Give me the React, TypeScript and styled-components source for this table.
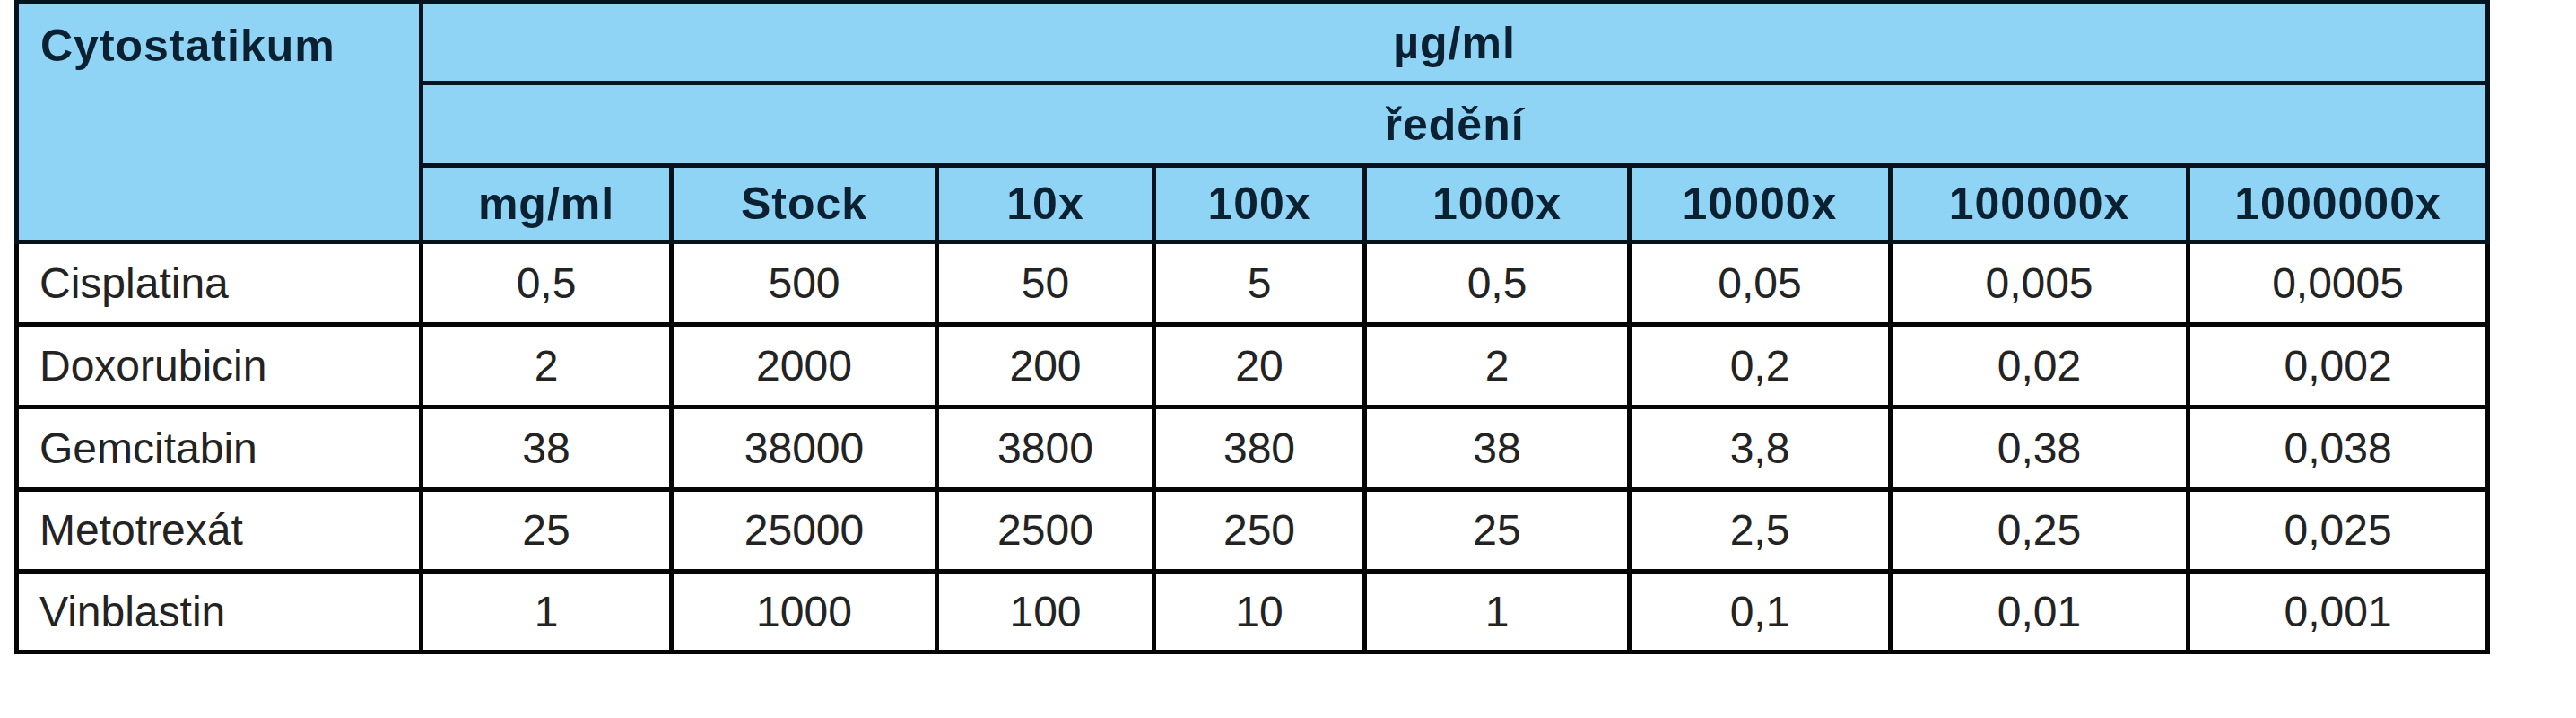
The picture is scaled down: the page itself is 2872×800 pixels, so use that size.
import React from 'react';
import styled, { createGlobalStyle } from 'styled-components';

const GlobalStyle = createGlobalStyle`
  html, body {
    margin: 0;
    padding: 0;
    background: #ffffff;
  }
  body {
    font-family: "Liberation Sans", Arial, sans-serif;
  }
`;

const Page = styled.div`
  padding: 0 0 0 16px;
`;

const Table = styled.table`
  border-collapse: collapse;
  table-layout: fixed;
  width: 2755px;
  border: 5px solid #050b12;
`;

const Row = styled.tr<{ $h: number }>`
  height: ${p => p.$h}px;
`;

const HeadCell = styled.th<{ $first?: boolean }>`
  background: #8fd3f5;
  color: #0b2131;
  font-weight: 700;
  font-size: 50px;
  line-height: 1;
  letter-spacing: 1px;
  border: 5px solid #06121c;
  padding: ${p => (p.$first ? '21px 20px 0 24px' : '0 8px')};
  text-align: ${p => (p.$first ? 'left' : 'center')};
  vertical-align: ${p => (p.$first ? 'top' : 'middle')};
  white-space: nowrap;
`;

const Cell = styled.td<{ $first?: boolean }>`
  color: #232323;
  font-size: 48px;
  line-height: 1;
  border: 5px solid #050505;
  padding: ${p => (p.$first ? '0 0 0 23px' : '0 8px')};
  text-align: ${p => (p.$first ? 'left' : 'center')};
  vertical-align: middle;
  white-space: nowrap;
`;

const colWidths = [451, 279, 296, 242, 235, 295, 291, 332, 334];

const dilutions = ['mg/ml', 'Stock', '10x', '100x', '1000x', '10000x', '100000x', '1000000x'];

const rows = [
  ['Cisplatina', '0,5', '500', '50', '5', '0,5', '0,05', '0,005', '0,0005'],
  ['Doxorubicin', '2', '2000', '200', '20', '2', '0,2', '0,02', '0,002'],
  ['Gemcitabin', '38', '38000', '3800', '380', '38', '3,8', '0,38', '0,038'],
  ['Metotrexát', '25', '25000', '2500', '250', '25', '2,5', '0,25', '0,025'],
  ['Vinblastin', '1', '1000', '100', '10', '1', '0,1', '0,01', '0,001'],
];

const rowHeights = [92, 92, 92, 91, 90];

export default function App() {
  return (
    <>
      <GlobalStyle />
      <Page>
        <Table>
          <colgroup>
            {colWidths.map((w, i) => (
              <col key={i} style={{ width: w }} />
            ))}
          </colgroup>
          <thead>
            <Row $h={90}>
              <HeadCell $first rowSpan={3}>Cytostatikum</HeadCell>
              <HeadCell colSpan={8}>µg/ml</HeadCell>
            </Row>
            <Row $h={92}>
              <HeadCell colSpan={8}>ředění</HeadCell>
            </Row>
            <Row $h={85}>
              {dilutions.map(d => (
                <HeadCell key={d}>{d}</HeadCell>
              ))}
            </Row>
          </thead>
          <tbody>
            {rows.map((r, i) => (
              <Row key={r[0]} $h={rowHeights[i]}>
                {r.map((v, j) => (
                  <Cell key={j} $first={j === 0}>{v}</Cell>
                ))}
              </Row>
            ))}
          </tbody>
        </Table>
      </Page>
    </>
  );
}
